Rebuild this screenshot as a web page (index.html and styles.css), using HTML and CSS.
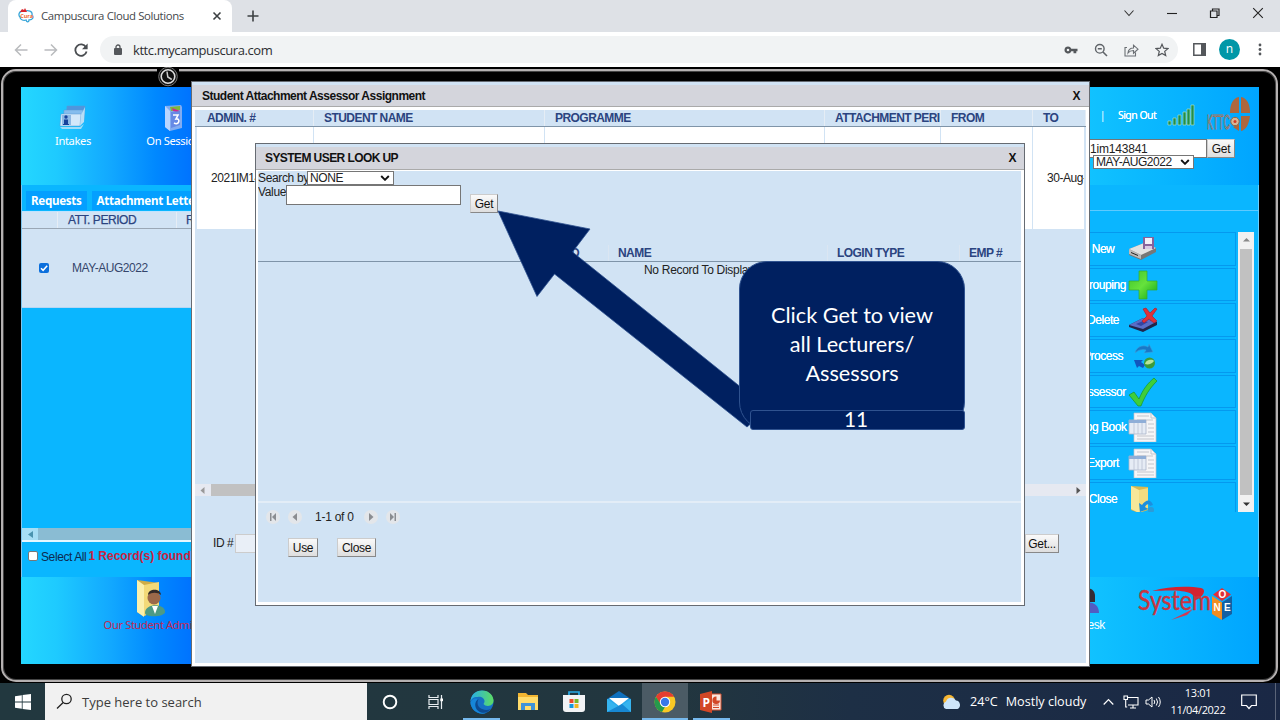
FILE: index.html
```html
<!DOCTYPE html>
<html lang="en">
<head>
<meta charset="utf-8">
<title>Campuscura Cloud Solutions</title>
<link rel="stylesheet" href="styles.css">
</head>
<body>
<header class="tabbar">
  <div class="tab">
    <svg class="favicon" width="16" height="16" viewBox="0 0 16 16"><path d="M5 3C1 3 0 7 2 9c0 3 4 4 6 3 1 3 3 2 3 0 4 0 5-3 3-5 1-4-4-5-7-4" fill="#fff" stroke="#38a5d8" stroke-width="1.3"/><path d="M2 4l2-3 2 1 1-2 2 4z" fill="#d8242b"/><text x="2.2" y="9.5" class="fav-text">Cura</text></svg>
    <span class="tab-title">Campuscura Cloud Solutions</span>
    <svg class="tab-x" width="10" height="10" viewBox="0 0 10 10"><path d="M1.5 1.5l7 7m0-7l-7 7" stroke="#3c4043" stroke-width="1.6"/></svg>
  </div>
  <svg class="plus" width="12" height="12" viewBox="0 0 12 12"><path d="M6 .5v11M.5 6h11" stroke="#3c4043" stroke-width="1.6"/></svg>
  <div class="winbtns">
    <svg width="12" height="12" viewBox="0 0 12 12"><path d="M1.5 3.5L6 8.500l4.500-5" fill="none" stroke="#333" stroke-width="1.1"/></svg>
    <svg width="12" height="12" viewBox="0 0 12 12"><path d="M1 6.500h10" stroke="#222" stroke-width="1.100"/></svg>
    <svg width="12" height="12" viewBox="0 0 12 12"><path d="M1.500 4h6.500v6.500h-6.500zM3.500 4V2h6.500v6.500H8" fill="none" stroke="#222" stroke-width="1.200"/></svg>
    <svg width="12" height="12" viewBox="0 0 12 12"><path d="M1.200 1.200l9.600 9.600m0-9.600l-9.600 9.600" stroke="#222" stroke-width="1.100"/></svg>
  </div>
</header>
<nav class="toolbar">
  <svg width="14" height="14" viewBox="0 0 14 14"><path d="M13.500 7H1.500M7 1.500L1.500 7 7 12.500" fill="none" stroke="#b9bbbe" stroke-width="1.500"/></svg>
  <svg width="14" height="14" viewBox="0 0 14 14"><path d="M.5 7h12M7 1.500L12.500 7 7 12.500" fill="none" stroke="#b9bbbe" stroke-width="1.500"/></svg>
  <svg width="14" height="14" viewBox="0 0 14 14"><path d="M12 4.200A5.700 5.700 0 1 0 12.600 8.500" fill="none" stroke="#4a4d51" stroke-width="1.800"/><path d="M13.600.5v5.700H8z" fill="#4a4d51"/></svg>
  <div class="omnibox">
    <svg width="8" height="12" viewBox="0 0 8 12"><rect y="4" width="8" height="7" rx="1" fill="#54575b"/><path d="M2 4.500V3a2 2 0 0 1 4 0v1.500" fill="none" stroke="#54575b" stroke-width="1.300"/></svg>
    <span class="url">kttc.mycampuscura.com</span>
    <div class="omni-icons">
      <svg width="14" height="14" viewBox="0 0 14 14"><path d="M4 3.500a3.500 3.500 0 1 0 3.300 4.700H9.500V10.300h2.800V8.200h1.200V5.800H7.300A3.500 3.500 0 0 0 4 3.500zM4 5.700a1.300 1.300 0 1 1 0 2.600 1.300 1.300 0 0 1 0-2.600z" fill="#54575b" fill-rule="evenodd"/></svg>
      <svg width="14" height="14" viewBox="0 0 14 14"><circle cx="5.800" cy="5.800" r="4.300" fill="none" stroke="#5f6368" stroke-width="1.400"/><path d="M9 9l4 4M3.800 5.800h4" stroke="#5f6368" stroke-width="1.600"/></svg>
      <svg width="15" height="14" viewBox="0 0 15 14"><path d="M3 4.500H1v8.500h10.500V9.500M4 10c.3-3.500 2.200-5 5.500-5V2.200l4.500 4-4.500 4V7.500C7 7.500 5.300 8.200 4 10z" fill="none" stroke="#6b6f74" stroke-width="1.100"/></svg>
      <svg width="14" height="14" viewBox="0 0 14 14"><path d="M7 1.300l1.700 3.900 4.200.4-3.200 2.800 1 4.200L7 10.400l-3.700 2.200 1-4.200L1.100 5.600l4.200-.4z" fill="none" stroke="#54575b" stroke-width="1.200"/></svg>
    </div>
  </div>
  <svg class="side" width="13" height="13" viewBox="0 0 13 13"><path d="M.8.8h11.400v11.400H.8z" fill="none" stroke="#54575b" stroke-width="1.500"/><path d="M8 0h5v13H8z" fill="#54575b"/></svg>
  <span class="avatar">n</span>
  <svg class="kebab" width="4" height="13" viewBox="0 0 4 13"><g fill="#54575b"><circle cx="2" cy="2" r="1.400"/><circle cx="2" cy="6.500" r="1.400"/><circle cx="2" cy="11" r="1.400"/></g></svg>
</nav>

<main class="monitor">
  <div class="bezel"></div>
  <svg class="clock" width="22" height="20" viewBox="0 0 22 20"><path d="M0 0h22v6H0z" fill="#000"/><circle cx="11" cy="9.500" r="9.300" fill="#111" stroke="#777" stroke-width="1"/><circle cx="11" cy="9.500" r="6.800" fill="#111" stroke="#ddd" stroke-width="1.600"/><path d="M10 4.500l.8 5.500 4 2.500" fill="none" stroke="#ccc" stroke-width="1.500"/></svg>
  <div class="screen">
    <section class="banner">
      <div class="launch intakes">
        <svg width="28" height="26" viewBox="0 0 28 26"><g stroke="#5a9bd2" stroke-width=".5"><path d="M8 2h18l-1 14H7z" fill="#4f95de"/><path d="M5 6h19l-1 13H4z" fill="#86bdee"/><path d="M2 10h20l-1 12H1z" fill="#d3e8fa"/></g><path d="M3 11h9v10H3z" fill="#8db8e4"/><circle cx="7" cy="13" r="1.700" fill="#17429c"/><path d="M5 15.500h4V20h1v1H4v-1h1z" fill="#17429c"/><path d="M22 11l4-8-1 15-4 4z" fill="#b8def6"/><path d="M1 23l20 0 4-3-3 5H3z" fill="#9fdcf7"/></svg>
        <span>Intakes</span>
      </div>
      <div class="launch session">
        <svg width="24" height="28" viewBox="0 0 24 28"><path d="M3 2l16-1 1 2v21L8 27 3 23z" fill="#82acf1"/><path d="M3 2l5 5v20l-5-4z" fill="#b9d5ff"/><path d="M8 3l10-1v4l-9 1z" fill="#7eb63a"/><path d="M10 4l8 3v2l-7-2z" fill="#c92b8d"/><path d="M9 8l9-1v14l-9 3z" fill="#668ae5"/><path d="M11 11h5l-2 4c5-1 3 7-2 4" fill="none" stroke="#fff" stroke-width="1.600"/></svg>
        <span>On Session</span>
      </div>
      <div class="account">
        <span class="bar">|</span><span class="signout">Sign Out</span>
        <svg class="signal" width="28" height="22" viewBox="0 0 28 22"><g fill="#1f8f4d" stroke="#bfe8c4" stroke-width=".6"><path d="M1 17h3v4H1zM6 14h3v7H6zM11 11h3v10h-3zM16 8h3v13h-3zM20 5h3v16h-3zM24 1h3v20h-3z"/></g></svg>
        <svg class="kttc" width="46" height="38" viewBox="0 0 46 38"><text x="1" y="33" textLength="23" lengthAdjust="spacingAndGlyphs" class="kttc-text">KTTC</text><g fill="#ad673d"><path d="M33 1C27 2 24 8 24 17h9zM35 1c6 1 9 7 9 16h-9zM35 20h9c-1 8-4 14-9 15zM33 28v7l-6-4z"/></g><circle cx="29" cy="25.500" r="4.200" fill="#d6b697" stroke="#99623c"/><circle cx="29" cy="25.500" r="1.500" fill="#d23b24"/></svg>
      </div>
    </section>

    <section class="work">
      <div class="left">
        <div class="tabs"><span class="ptab">Requests</span><span class="ptab wide">Attachment Letters</span></div>
        <div class="grid">
          <div class="ghead"><span class="gc1"></span><span class="gc2">ATT. PERIOD</span><span class="gc3">REG</span></div>
          <div class="grow"><span class="cb on"><svg width="10" height="10" viewBox="0 0 10 10"><path d="M2 5.200l2.100 2.100L8.200 2.800" fill="none" stroke="#fff" stroke-width="1.500"/></svg></span><span class="period">MAY-AUG2022</span></div>
        </div>
        <div class="hscroll"><span class="arrow-box"><svg width="5" height="7" viewBox="0 0 5 7"><path d="M5 0v7L0 3.500z" fill="#4a94b0"/></svg></span></div>
        <div class="selectall"><span class="cb"></span><span class="sel">Select All</span><b class="found">1 Record(s) found</b></div>
      </div>
      <div class="right">
        <div class="searchrow"><span class="box admin">1im143841</span><span class="btn get1">Get</span></div>
        <div class="box select term"><span>MAY-AUG2022</span><svg width="10" height="6" viewBox="0 0 10 6"><path d="M1.200 1l3.800 3.800L8.800 1" fill="none" stroke="#111" stroke-width="1.900"/></svg></div>
        <div class="actions">
          <div class="list">
            <div class="act"><span>New</span><svg width="30" height="30" viewBox="0 0 30 30"><path d="M1 15l15-6 12 5v4l-15 8-12-5z" fill="#777"/><path d="M1 15l15-6 12 5-15 7z" fill="#e2e2e2"/><path d="M1 15l12 6v4L1 20z" fill="#bcbcbc"/><path d="M15 3h11v12H15z" fill="#87639c"/><path d="M17 4h7v6h-7z" fill="#f3f0fa"/><path d="M17 12h7v3h-7z" fill="#d9c9e3"/><path d="M3 18.500l7 3" stroke="#222"/></svg></div>
            <div class="act"><span>Grouping</span><svg width="30" height="30" viewBox="0 0 30 30"><defs><linearGradient id="g" x2="1" y2="1"><stop stop-color="#3fc42c"/><stop offset=".5" stop-color="#66e23c"/><stop offset="1" stop-color="#12a818"/></linearGradient></defs><path d="M11 1h8v10h10v9H19v9h-8v-9H1v-9h10z" fill="url(#g)" stroke="#35ae2e" stroke-width=".7"/></svg></div>
            <div class="act"><span>Delete</span><svg width="30" height="30" viewBox="0 0 30 30"><path d="M1 20l14-7 14 4v3l-14 7L1 22z" fill="#20264c"/><path d="M1 20l14-7 13 4-13 7z" fill="#5a6dc6"/><path d="M8 19l7-3 5 1-7 4z" fill="#3444a2"/><path d="M15 4l3-1 4 5 5-5 2 1-5 7 5 5-3 2-5-4-5 4-2-2 5-5z" fill="#df3038" stroke="#a71a28" stroke-width=".6"/></svg></div>
            <div class="act"><span>Process</span><svg width="30" height="30" viewBox="0 0 30 30"><path d="M7 12c1-6 8-9 13-6l1-3 4 8-9 1 2-3c-4-1-8 0-11 3z" fill="#1978c7" stroke="#3ba2dc" stroke-width=".6"/><path d="M6 19l9 0-2 2 4 3-2 3-4-2-2 2z" fill="#1255bd"/><circle cx="21.500" cy="22" r="5.500" fill="#3c9b38"/><path d="M17 23c1-5 8-5 9-3-2 3-6 4-9 3z" fill="#b8e49a"/></svg></div>
            <div class="act"><span>Assessor</span><svg width="30" height="30" viewBox="0 0 30 30"><path d="M1 18l5-3 5 7C15 12 20 6 26 1l3 3C21 12 17 19 13 29h-3z" fill="#3fce3a" stroke="#159628" stroke-width=".7"/></svg></div>
            <div class="act"><span>Log Book</span><svg width="30" height="30" viewBox="0 0 30 30"><path d="M6 1h17l5 5v24H6z" fill="#f5f5f7" stroke="#c0c2ca" stroke-width=".7"/><path d="M23 1v5h5M9 4h12M9 8h16M20 12h6M20 16h6M20 20h6M9 24h17M9 27h17" stroke="#c3c5cc" fill="none"/><path d="M1 8h17v14H1z" fill="#e6ecf5" stroke="#a9b5c9" stroke-width=".8"/><path d="M1 8h17v3H1z" fill="#8faed7"/><path d="M6 11v11m4-11v11m4-11v11" stroke="#b9c2d2" stroke-width=".8"/></svg></div>
            <div class="act"><span>Export</span><svg width="30" height="30" viewBox="0 0 30 30"><path d="M6 1h17l5 5v24H6z" fill="#f5f5f7" stroke="#c0c2ca" stroke-width=".7"/><path d="M23 1v5h5M9 4h12M9 8h16M20 12h6M20 16h6M20 20h6M9 24h17M9 27h17" stroke="#c3c5cc" fill="none"/><path d="M1 8h17v14H1z" fill="#e6ecf5" stroke="#a9b5c9" stroke-width=".8"/><path d="M1 8h17v3H1z" fill="#8faed7"/><path d="M6 11v11m4-11v11m4-11v11" stroke="#b9c2d2" stroke-width=".8"/></svg></div>
            <div class="act last"><span>Close</span><svg width="30" height="30" viewBox="0 0 30 30"><path d="M3 2l17 1v23l-9 3-8-3z" fill="#d9b950"/><path d="M3 2l8 4v23l-8-4z" fill="#f7e799"/><path d="M11 6l9-2v20l-9 5z" fill="#f2dc80"/><path d="M12 28l-1-9 3 2c4-6 9-6 11 0l-3 1c-1-3-4-2-5 1l3 2z" fill="#1d8fdf"/><circle cx="23" cy="26" r="3" fill="#2c9bd8"/></svg></div>
          </div>
          <div class="vscroll"><svg width="7" height="5" viewBox="0 0 7 5"><path d="M0 4.500h7L3.500 1z" fill="#888"/></svg><i></i><svg width="7" height="5" viewBox="0 0 7 5"><path d="M0 .5h7L3.500 4z" fill="#333"/></svg></div>
        </div>
      </div>
    </section>

    <section class="dock">
      <div class="launch student">
        <svg width="34" height="40" viewBox="0 0 34 40"><path d="M3 1l22 3v27l-15 6-7-4z" fill="#cfad48"/><path d="M10 6l15-3v27l-15 7z" fill="#f3da78"/><path d="M3 1l7 5v32l-7-5z" fill="#fbf0ad"/><path d="M11 34c0-10 20-10 20-1 0 5-20 6-20 1z" fill="#4d9a84"/><path d="M18 27l3 8 3-8z" fill="#fff"/><circle cx="20" cy="19" r="6.500" fill="#9b694a"/><path d="M14 16c0-7 13-7 13 0-4-3-9-3-13 0z" fill="#332b29"/></svg>
        <span>Our Student Admin</span>
      </div>
      <div class="launch desk">
        <svg width="22" height="28" viewBox="0 0 22 28"><path d="M2 26c0-14 19-14 19 0z" fill="#525cc2"/><path d="M4 9C4-1 17-1 17 9v6H4z" fill="#352d34"/></svg>
        <span>Help Desk</span>
      </div>
      <svg class="sysone" width="98" height="38" viewBox="0 0 98 38"><path d="M15 5C32 0 52 0 64 2c6 1 3 9-7 13 2-9-8-12-42-10z" fill="#d32331"/><text x="1" y="24" textLength="73" lengthAdjust="spacingAndGlyphs" class="sys-text">System</text><path d="M34 34l22-11-6 6z" fill="#d43a52"/><path d="M85 2l9 6.500-9 6.500-9-6.500z" fill="#df3038"/><path d="M75 10l10 6.500V34l-10-6z" fill="#f28d21"/><path d="M95 10l-10 6.500V34l10-6z" fill="#1460a2"/><g class="cube"><text x="81.500" y="12">O</text><text x="76.500" y="25">N</text><text x="87" y="25">E</text></g></svg>
    </section>
  </div>

  <section class="dialog outer">
    <div class="title"><span>Student Attachment Assessor Assignment</span><span>X</span></div>
    <div class="dbody">
      <div class="table">
        <div class="thead"><span>ADMIN. #</span><span>STUDENT NAME</span><span>PROGRAMME</span><span>ATTACHMENT PERIOD</span><span>FROM</span><span>TO</span></div>
        <div class="trow"><span>2021IM143841</span><span></span><span></span><span></span><span></span><span>30-Aug-2022</span></div>
      </div>
      <div class="dscroll"><svg width="5" height="7" viewBox="0 0 5 7"><path d="M4.500 0v7L.5 3.500z" fill="#999"/></svg><i></i><svg width="5" height="7" viewBox="0 0 5 7"><path d="M.5 0v7l4-3.500z" fill="#555"/></svg></div>
      <div class="idrow"><span>ID #</span><span class="idbox"></span><span class="btn">Get...</span></div>
    </div>
  </section>

  <section class="dialog inner">
    <div class="title"><span>SYSTEM USER LOOK UP</span><span>X</span></div>
    <div class="dbody">
      <div class="form">
        <div class="fields">
          <div class="frow"><span class="lab">Search by</span><span class="box select none"><span>NONE</span><svg width="10" height="6" viewBox="0 0 10 6"><path d="M1.200 1l3.800 3.800L8.800 1" fill="none" stroke="#111" stroke-width="1.900"/></svg></span></div>
          <div class="frow"><span>Value</span><span class="box value"></span></div>
        </div>
        <span class="btn get2">Get</span>
      </div>
      <div class="lhead"><span>USER ID</span><span>NAME</span><span>LOGIN TYPE</span><span>EMP #</span></div>
      <div class="empty">No Record To Display</div>
      <div class="pager">
        <i><svg width="8" height="8" viewBox="0 0 8 8"><path d="M1 0h1.500v8H1zM7 0v8L3 4z" fill="#8b8d91"/></svg></i>
        <i><svg width="8" height="8" viewBox="0 0 8 8"><path d="M6 0v8L1.500 4z" fill="#8b8d91"/></svg></i>
        <span>1-1 of 0</span>
        <i><svg width="8" height="8" viewBox="0 0 8 8"><path d="M2 0v8l4.500-4z" fill="#8b8d91"/></svg></i>
        <i><svg width="8" height="8" viewBox="0 0 8 8"><path d="M5.500 0H7v8H5.500zM1 0v8l4-4z" fill="#8b8d91"/></svg></i>
      </div>
      <div class="btns"><span class="btn use">Use</span><span class="btn close">Close</span></div>
    </div>
  </section>
</main>

<footer class="taskbar">
  <svg class="start" width="16" height="16" viewBox="0 0 16 16"><path d="M0 2.200l6.800-1v6.400H0zM7.600 1.100L16 0v7.600H7.600zM0 8.400h6.800v6.400L0 13.800zM7.600 8.400H16V16l-8.400-1.100z" fill="#fff"/></svg>
  <div class="search"><svg width="17" height="17" viewBox="0 0 17 17"><circle cx="10.500" cy="6" r="4.700" fill="none" stroke="#222" stroke-width="1.300"/><path d="M7.200 9.500L1 15.500" stroke="#222" stroke-width="1.300"/></svg><span>Type here to search</span></div>
  <div class="apps">
    <i><svg width="16" height="16" viewBox="0 0 16 16"><circle cx="8" cy="8" r="6.300" fill="none" stroke="#fff" stroke-width="1.900"/></svg></i>
    <i><svg width="16" height="16" viewBox="0 0 16 16"><path d="M1 1v2.500h9V1M1 15v-2.500h9V15M1 5.500h9v5H1zM13.500 1v14" fill="none" stroke="#e8edf0" stroke-width="1.200"/><path d="M12.300 4.500H15v2.700h-2.700z" fill="#fff"/></svg></i>
    <i class="run"><svg width="24" height="24" viewBox="0 0 24 24"><defs><linearGradient id="e" x2="1"><stop stop-color="#28aee8"/><stop offset="1" stop-color="#5ddc62"/></linearGradient></defs><circle cx="12" cy="12" r="11.500" fill="#1670c4"/><path d="M.6 10C3-3 22-2 23.500 10c.5 7-8 7-10 4 3-4-1-8-6-7C3 7 1 9 .6 12z" fill="url(#e)"/><path d="M8 9c-6 6 1 14 8 14-9 3-16-5-15.500-11C3 8 6 8 8 9z" fill="#1686d9"/><path d="M8.500 9c-4 8 5 13 12 10-6 8-17 2-15-6 .5-2 2-3.500 3-4z" fill="#0d4a91"/></svg></i>
    <i><svg width="22" height="20" viewBox="0 0 22 20"><path d="M1 1h8l2 2h10v15H1z" fill="#f2b632"/><path d="M1 5h20v13H1z" fill="#ffdc6b"/><path d="M4 11h14v7h-4v-4H8v4H4z" fill="#3e93d8"/></svg></i>
    <i><svg width="22" height="22" viewBox="0 0 22 22"><path d="M6 6V1h10v5" fill="none" stroke="#29abe8" stroke-width="1.700"/><path d="M0 4h22v14q0 3-3 3H3q-3 0-3-3z" fill="#f2f3f5"/><path d="M6.500 8h4v4h-4z" fill="#ea4b2d"/><path d="M11.500 8h4v4h-4z" fill="#78b72a"/><path d="M6.500 13h4v4h-4z" fill="#1698df"/><path d="M11.500 13h4v4h-4z" fill="#f4b624"/></svg></i>
    <i><svg width="24" height="22" viewBox="0 0 24 22"><path d="M0 8L12 0l12 8v13H0z" fill="#0f70bd"/><path d="M0 8h24v13H0z" fill="#28a8ea"/><path d="M2 7h20l-10 8z" fill="#fff"/><path d="M0 8l12 8L24 8v13H0z" fill="#36b4ef"/><path d="M0 21l15-8 9 8z" fill="#1788d3"/></svg></i>
    <i class="run active"><svg width="22" height="22" viewBox="0 0 22 22"><circle cx="11" cy="11" r="10.500" fill="#f9c824"/><path d="M1.900 5.700A10.500 10.500 0 0 1 20.100 5.700H11L6.400 13.600z" fill="#e53d30"/><path d="M1.900 5.700L8 15l3 1-3 5.100A10.500 10.500 0 0 1 1.900 5.700z" fill="#269a4b"/><circle cx="11" cy="11" r="5.200" fill="#fff"/><circle cx="11" cy="11" r="4.200" fill="#3978e8"/></svg></i>
    <i class="run"><svg width="22" height="22" viewBox="0 0 22 22"><path d="M10 3h11v16H10z" fill="#f9e6df" stroke="#d35230"/><path d="M16.500 5.500v4h3.500a3.800 3.800 0 1 1-3.500-4z" fill="#d24726"/><path d="M13 14h6M13 16.500h6" stroke="#d24726"/><path d="M0 3l12-3v22L0 19z" fill="#d24726"/><text x="2.500" y="15.500" class="pp">P</text></svg></i>
  </div>
  <div class="tray">
    <svg width="20" height="16" viewBox="0 0 20 16"><circle cx="7" cy="6.500" r="5.800" fill="#f7b733"/><path d="M4 15a4 4 0 0 1 0-7.500 5.500 5.500 0 0 1 10-1 4.500 4.500 0 0 1 1.500 8.500z" fill="#cfe6fa"/></svg>
    <span class="weather"><span>24°C</span><span>Mostly cloudy</span></span>
    <svg class="chev" width="11" height="8" viewBox="0 0 11 8"><path d="M.7 6.500l4.800-5 4.800 5" fill="none" stroke="#fff" stroke-width="1.200"/></svg>
    <svg class="net" width="16" height="14" viewBox="0 0 16 14"><path d="M4 2.500h11v7.500H5M7 13h6M10 10v3M1 1h3.500v3.500H1zM2.700 4.500V12h1.500" fill="none" stroke="#fff" stroke-width="1.100"/></svg>
    <svg class="vol" width="17" height="14" viewBox="0 0 17 14"><path d="M1 5h2.500L7 2v10L3.500 9H1zM9 5q1.500 2 0 4M11.300 3.500q2.500 3.500 0 7M13.500 2q3.500 5 0 10" fill="none" stroke="#fff" stroke-width="1"/></svg>
    <span class="time"><span>13:01</span><span>11/04/2022</span></span>
    <svg class="note" width="16" height="16" viewBox="0 0 16 16"><path d="M.7 1h14.600v10.500H10.500L8 14.500l-2.500-3H.7z" fill="none" stroke="#fff" stroke-width="1.200"/></svg>
    <span class="peek"></span>
  </div>
</footer>

<svg class="pointer" width="280" height="230" viewBox="490 205 280 230"><path d="M498 211L590 229 572.500 252 768 409 747 427 554.500 274 537 296.500z" fill="#002060" stroke="#2f528f" stroke-width=".8"/></svg>
<aside class="callout"><p>Click Get to view<br>all Lecturers/<br>Assessors</p></aside>
<aside class="step">11</aside>
</body>
</html>
```
FILE: styles.css
```css
* { box-sizing: border-box; }
body { margin: 0; width: 1280px; height: 720px; overflow: hidden; display: flex; flex-direction: column; position: relative; font: 12px/14px "Liberation Sans", Arial, sans-serif; letter-spacing: -.45px; color: #222; white-space: nowrap; }
svg { display: block; flex: none; }
i { font-style: normal; }

.tabbar { height: 32px; flex: none; background: #dee1e6; display: flex; align-items: center; padding-left: 8px; }
.tab { width: 224px; height: 32px; background: #fff; border-radius: 8px 8px 0 0; display: flex; align-items: center; padding: 0 10px; font: 11.4px/16px "Open Sans", sans-serif; letter-spacing: -.38px; color: #45484c; }
.tab-title { margin-left: 7px; width: 172px; }
.tab-x { margin-left: auto; }
.fav-text { font: bold 5.5px "Open Sans", sans-serif; letter-spacing: 0; fill: #ee6a31; }
.plus { margin-left: 15px; }
.winbtns { margin-left: auto; margin-right: 16px; display: flex; gap: 31px; margin-top: -6px; }
.toolbar { height: 35px; flex: none; background: #fff; display: flex; align-items: center; padding: 0 18px 0 14px; gap: 16px; letter-spacing: 0; }
.omnibox { flex: none; width: 1078px; height: 27px; margin-left: -4px; border-radius: 14px; background: #f1f3f4; display: flex; align-items: center; padding: 0 9px 0 14px; }
.url { margin-left: 11px; font: 13px/16px "Open Sans", sans-serif; letter-spacing: -.42px; color: #2c2e31; }
.omni-icons { margin-left: auto; display: flex; gap: 16px; }
.side { margin-left: -1px; }
.avatar { width: 21px; height: 21px; border-radius: 50%; background: #0097a7; color: #fff; text-align: center; font: 12px/19px "Open Sans", sans-serif; margin-left: -3px; }
.kebab { margin-left: 2px; }

.monitor { height: 616px; flex: none; background: #000; position: relative; padding: 20px 21px 0; }
.bezel { position: absolute; inset: 2px 2px 1px 1px; border: 2px solid #b5b1b1; border-radius: 15px; box-shadow: inset 0 0 0 1px #444; }
.clock { position: absolute; left: 157px; top: 0; }
.screen { height: 577px; display: flex; flex-direction: column; background: #0ab6ff; position: relative; overflow: hidden; }
.banner, .dock { background: linear-gradient(90deg, #24d7ff 0, #1ecaff 36px, #12a8ff 90px, #0088ff 135px, #0072ff 172px, #11c2ff 1068px, #09b6ff 1140px, #00a5ff 1238px); }
.banner { height: 98px; flex: none; display: flex; }
.launch { display: flex; flex-direction: column; align-items: center; color: #fff; font: 11.200px/14px "Noto Sans", sans-serif; letter-spacing: -.4px; }
.intakes { width: 104px; padding-top: 17px; }
.intakes span { margin-top: 4px; }
.session { width: 97px; padding-top: 17px; }
.session span { margin-top: 2px; }
.account { margin-left: auto; display: flex; color: #fff; padding-right: 7px; font: 10.500px/14px "Noto Sans", sans-serif; letter-spacing: -.55px; }
.bar { margin-top: 21px; }
.signout { margin: 21px 0 0 13px; width: 38px; text-shadow: 0 0 .5px #fff; }
.signal { margin: 17px 0 0 11px; }
.kttc { margin: 9px 0 0 11px; }
.kttc-text { font: 21px "Liberation Sans", sans-serif; letter-spacing: 0; fill: none; stroke: #a8755c; stroke-width: 1.100px; }

.work { height: 392px; flex: none; display: flex; justify-content: space-between; }
.left { width: 400px; display: flex; flex-direction: column; border-left: 1px solid #7fc5ee; }
.tabs { height: 26px; padding: 6px 0 0 4px; display: flex; gap: 5px; }
.ptab { height: 19px; padding: 0 5px; background: #049fff; color: #fff; font: bold 11.600px/20px "Noto Sans", sans-serif; letter-spacing: -.3px; }
.grid { height: 317px; border-top: 1px solid #bfe3ff; }
.ghead { height: 17px; display: flex; background: #d1e3f4; border-bottom: 1px solid #9aa7b5; color: #2b4480; line-height: 17px; }
.ghead span { border-right: 1px solid #e6edf5; -webkit-text-stroke: .25px; }
.gc1 { width: 36px; }
.gc2 { width: 119px; padding-left: 10px; }
.gc3 { padding-left: 9px; }
.grow { height: 79px; background: #d1e3f4; border-bottom: 1px solid #b5d6f4; display: flex; align-items: center; padding-left: 17px; color: #35466b; }
.cb { width: 10px; height: 10px; background: #fff; border: 1px solid #777; border-radius: 2px; flex: none; }
.cb.on { background: #0b6fdc; border: 0; }
.period { margin-left: 23px; }
.hscroll { height: 12px; background: #8abcd3; }
.arrow-box { width: 16px; height: 12px; display: grid; place-items: center; background: #a6def5; }
.selectall { border-top: 2px solid #e7f7ff; display: flex; align-items: center; height: 29px; padding-left: 6px; }
.sel { margin: 2px 0 0 3px; color: #0d2a50; letter-spacing: -.4px; }
.found { margin: 0 0 0 2px; letter-spacing: -.02px; color: #ca2240; }
.right { width: 300px; display: flex; flex-direction: column; padding-left: 130px; border-right: 1px solid #68cfff; }
.searchrow { display: flex; margin-left: -46px; margin-top: -46px; padding-left: 46px; position: relative; height: 19px; }
.box { background: #fff; border: 1px solid #767676; color: #222; }
.admin { width: 118px; height: 19px; padding-left: 0; line-height: 18px; letter-spacing: -.2px; }
.btn { display: inline-block; height: 19px; border: 1px solid #9a9a9a; border-color: #ccc #888 #888 #ccc; background: linear-gradient(#fafafa, #dedede); color: #111; line-height: 18px; padding: 0 3px; text-align: center; letter-spacing: -.3px; }
.get1 { width: 28px; }
.select { display: flex; align-items: center; justify-content: space-between; padding: 0 3px 0 2px; line-height: 12px; }
.term { width: 101px; height: 14px; margin-left: 4px; position: relative; margin-top: -3px; }
.actions { margin: 41px 0 0 -30px; border-top: 1px solid #5ecaff; padding-top: 21px; display: flex; }
.list { width: 177px; height: 280px; overflow: hidden; }
.act { height: 33.700px; margin-bottom: 2px; border: 1px solid #0599ee; display: flex; align-items: center; color: #fff; }
.act span { width: 60px; margin-left: 13px; text-align: center; text-shadow: 0 0 .5px #fff; }
.act svg { margin-left: -5px; }
.vscroll { width: 16px; height: 280px; background: #f1f1f1; display: flex; flex-direction: column; align-items: center; justify-content: space-between; padding: 5px 0; margin-left: 2px; }
.vscroll i { width: 12px; height: 246px; background: #c1c1c1; }

.dock { height: 87px; flex: none; display: flex; }
.student { width: 260px; padding-top: 2px; color: #c32955; }
.student span { margin-top: -1px; }
.desk { width: 60px; margin-left: auto; padding-top: 10px; font: 12px/14px "Liberation Sans", sans-serif; letter-spacing: -.4px; }
.desk svg { margin-left: 20px; }
.desk span { margin-top: 3px; }
.sysone { margin: 9px 24px 0 28px; }
.sys-text { font: 26px "Lato", sans-serif; letter-spacing: 0; fill: #c93540; stroke: #c93540; stroke-width: .4px; }
.cube { font: bold 10px "Liberation Sans", sans-serif; letter-spacing: 0; fill: #fff; }

.dialog { position: absolute; background: #fff; border: 1px solid #666b72; display: flex; flex-direction: column; }
.outer { left: 191px; top: 14px; width: 899px; height: 586px; }
.inner { left: 255px; top: 76px; width: 770px; height: 463px; }
.title { height: 25px; flex: none; background: #d4d5dc; border-top: 3px solid #d1e3f4; border-bottom: 1px solid #aaa; display: flex; justify-content: space-between; padding: 0 9px 0 10px; line-height: 23px; font-weight: bold; letter-spacing: -.5px; color: #111; }
.inner .title { height: 26px; line-height: 23px; padding: 0 8px 0 9px; letter-spacing: -.58px; }
.dbody { flex: 1; margin: 3px 3px 3px 3px; background: #d1e3f4; display: flex; flex-direction: column; overflow: hidden; }
.inner .dbody { margin: 1px 3px 3px 2px; }
.thead, .trow { display: grid; grid-template-columns: 119px 231px 280px 116px 92px 1fr; }
.thead { height: 17px; border-bottom: 1px solid #7f94a8; color: #2b4480; font-weight: bold; line-height: 16px; letter-spacing: -.55px; }
.thead span { border-right: 1px solid #e5edf5; padding-left: 10px; overflow: hidden; }
.thead span:first-child { padding-left: 12px; }
.trow { height: 102px; margin: 0 2px; background: #fff; line-height: 103px; grid-template-columns: 117px 231px 280px 116px 92px 1fr; }
.trow span { border-right: 1px solid #d1e3f4; padding-left: 14px; overflow: hidden; }
.trow span:last-child { padding-left: 14px; border: 0; }
.dscroll { height: 12px; margin-top: 255px; background: #e6e9f1; display: flex; align-items: center; padding: 0 5px; }
.dscroll i { width: 700px; height: 12px; background: #c1c1c1; margin: 0 auto 0 6px; }
.idrow { display: flex; margin-top: 38px; padding-left: 18px; line-height: 19px; }
.idrow > span:first-child { width: 21px; }
.idbox { width: 786px; height: 19px; border: 1px solid #ccc; background: #e9eff7; margin-left: 1px; margin-right: 4px; }
.idrow .btn { width: 34px; padding: 0; }

.form { height: 74px; display: flex; }
.fields { width: 203px; }
.frow { display: flex; height: 14px; line-height: 14px; letter-spacing: -.35px; }
.lab { width: 49px; }
.none { width: 87px; height: 14px; }
.frow > span:first-child:not(.lab) { width: 28px; }
.value { width: 175px; height: 20px; }
.get2 { width: 28px; margin: 23px 0 0 9px; }
.lhead { display: grid; grid-template-columns: 351px 219px 132px 1fr; height: 17px; border-bottom: 1px solid #7f94a8; line-height: 16px; color: #2b4480; font-weight: bold; letter-spacing: -.55px; }
.lhead span { padding-left: 9px; border-right: 1px solid #dbe6f2; }
.lhead span:first-child { text-align: right; padding-right: 29px; }
.empty { height: 239px; padding: 0 0 0 386px; line-height: 17px; letter-spacing: -.3px; }
.pager { border-top: 2px solid #e3edf7; display: flex; align-items: center; padding: 7px 0 0 8px; height: 23px; }
.pager i { width: 14px; height: 14px; border-radius: 50%; background: #e3e6ea; display: grid; place-items: center; margin-right: 8px; }
.pager span { width: 37px; margin: 0 12px 0 5px; letter-spacing: -.25px; }
.btns { display: flex; gap: 19px; padding: 14px 0 0 30px; }
.use { width: 30px; }
.close { width: 39px; }

.pointer { position: absolute; left: 490px; top: 205px; }
.callout { position: absolute; left: 739px; top: 261px; width: 226px; height: 169px; border-radius: 28px; background: #002060; border: 1px solid #2f528f; color: #fff; text-align: center; font: 21.700px/29px "Lato", sans-serif; letter-spacing: 0; }
.callout p { margin: 39px 0 0; }
.step { position: absolute; left: 750px; top: 410px; width: 215px; height: 20px; border-radius: 3px; border: 1px solid #2f528f; background: #002060; color: #fff; font: 20.800px/16px "Lato", sans-serif; letter-spacing: 0; text-align: center; padding-right: 3px; }

.taskbar { height: 37px; flex: none; display: flex; align-items: center; background: linear-gradient(90deg, #22383f 0, #22363f 680px, #1d2f45 850px, #1a2845 1280px); color: #fff; font-family: "Open Sans", sans-serif; letter-spacing: 0; }
.start { margin: 0 14px 0 15px; }
.search { width: 322px; height: 37px; background: #f1f1f1; display: flex; align-items: center; padding-left: 11px; gap: 9px; font-size: 13px; color: #3c3c3c; }
.apps { display: flex; }
.apps i { width: 45.900px; height: 37px; display: grid; place-items: center; }
.run { background: linear-gradient(#76b9ed, #76b9ed) bottom / 37px 2px no-repeat; }
.run.active { background: linear-gradient(#76b9ed, #76b9ed) bottom / 100% 2px no-repeat #4b5b65; }
.pp { font: bold 12px "Open Sans", sans-serif; fill: #fff; }
.tray { margin-left: auto; display: flex; align-items: center; padding-right: 4px; font-size: 12.600px; }
.weather { display: flex; gap: 8px; margin-left: 8px; width: 118px; }
.chev { margin-left: 15px; }
.net { margin-left: 9px; }
.vol { margin-left: 6px; }
.time { display: flex; flex-direction: column; align-items: center; margin-left: 8px; width: 56px; font-size: 11px; line-height: 16.500px; letter-spacing: -.35px; }
.note { margin-left: 15px; }
.peek { width: 1px; height: 37px; background: #5a6478; margin-left: 18px; }
```
